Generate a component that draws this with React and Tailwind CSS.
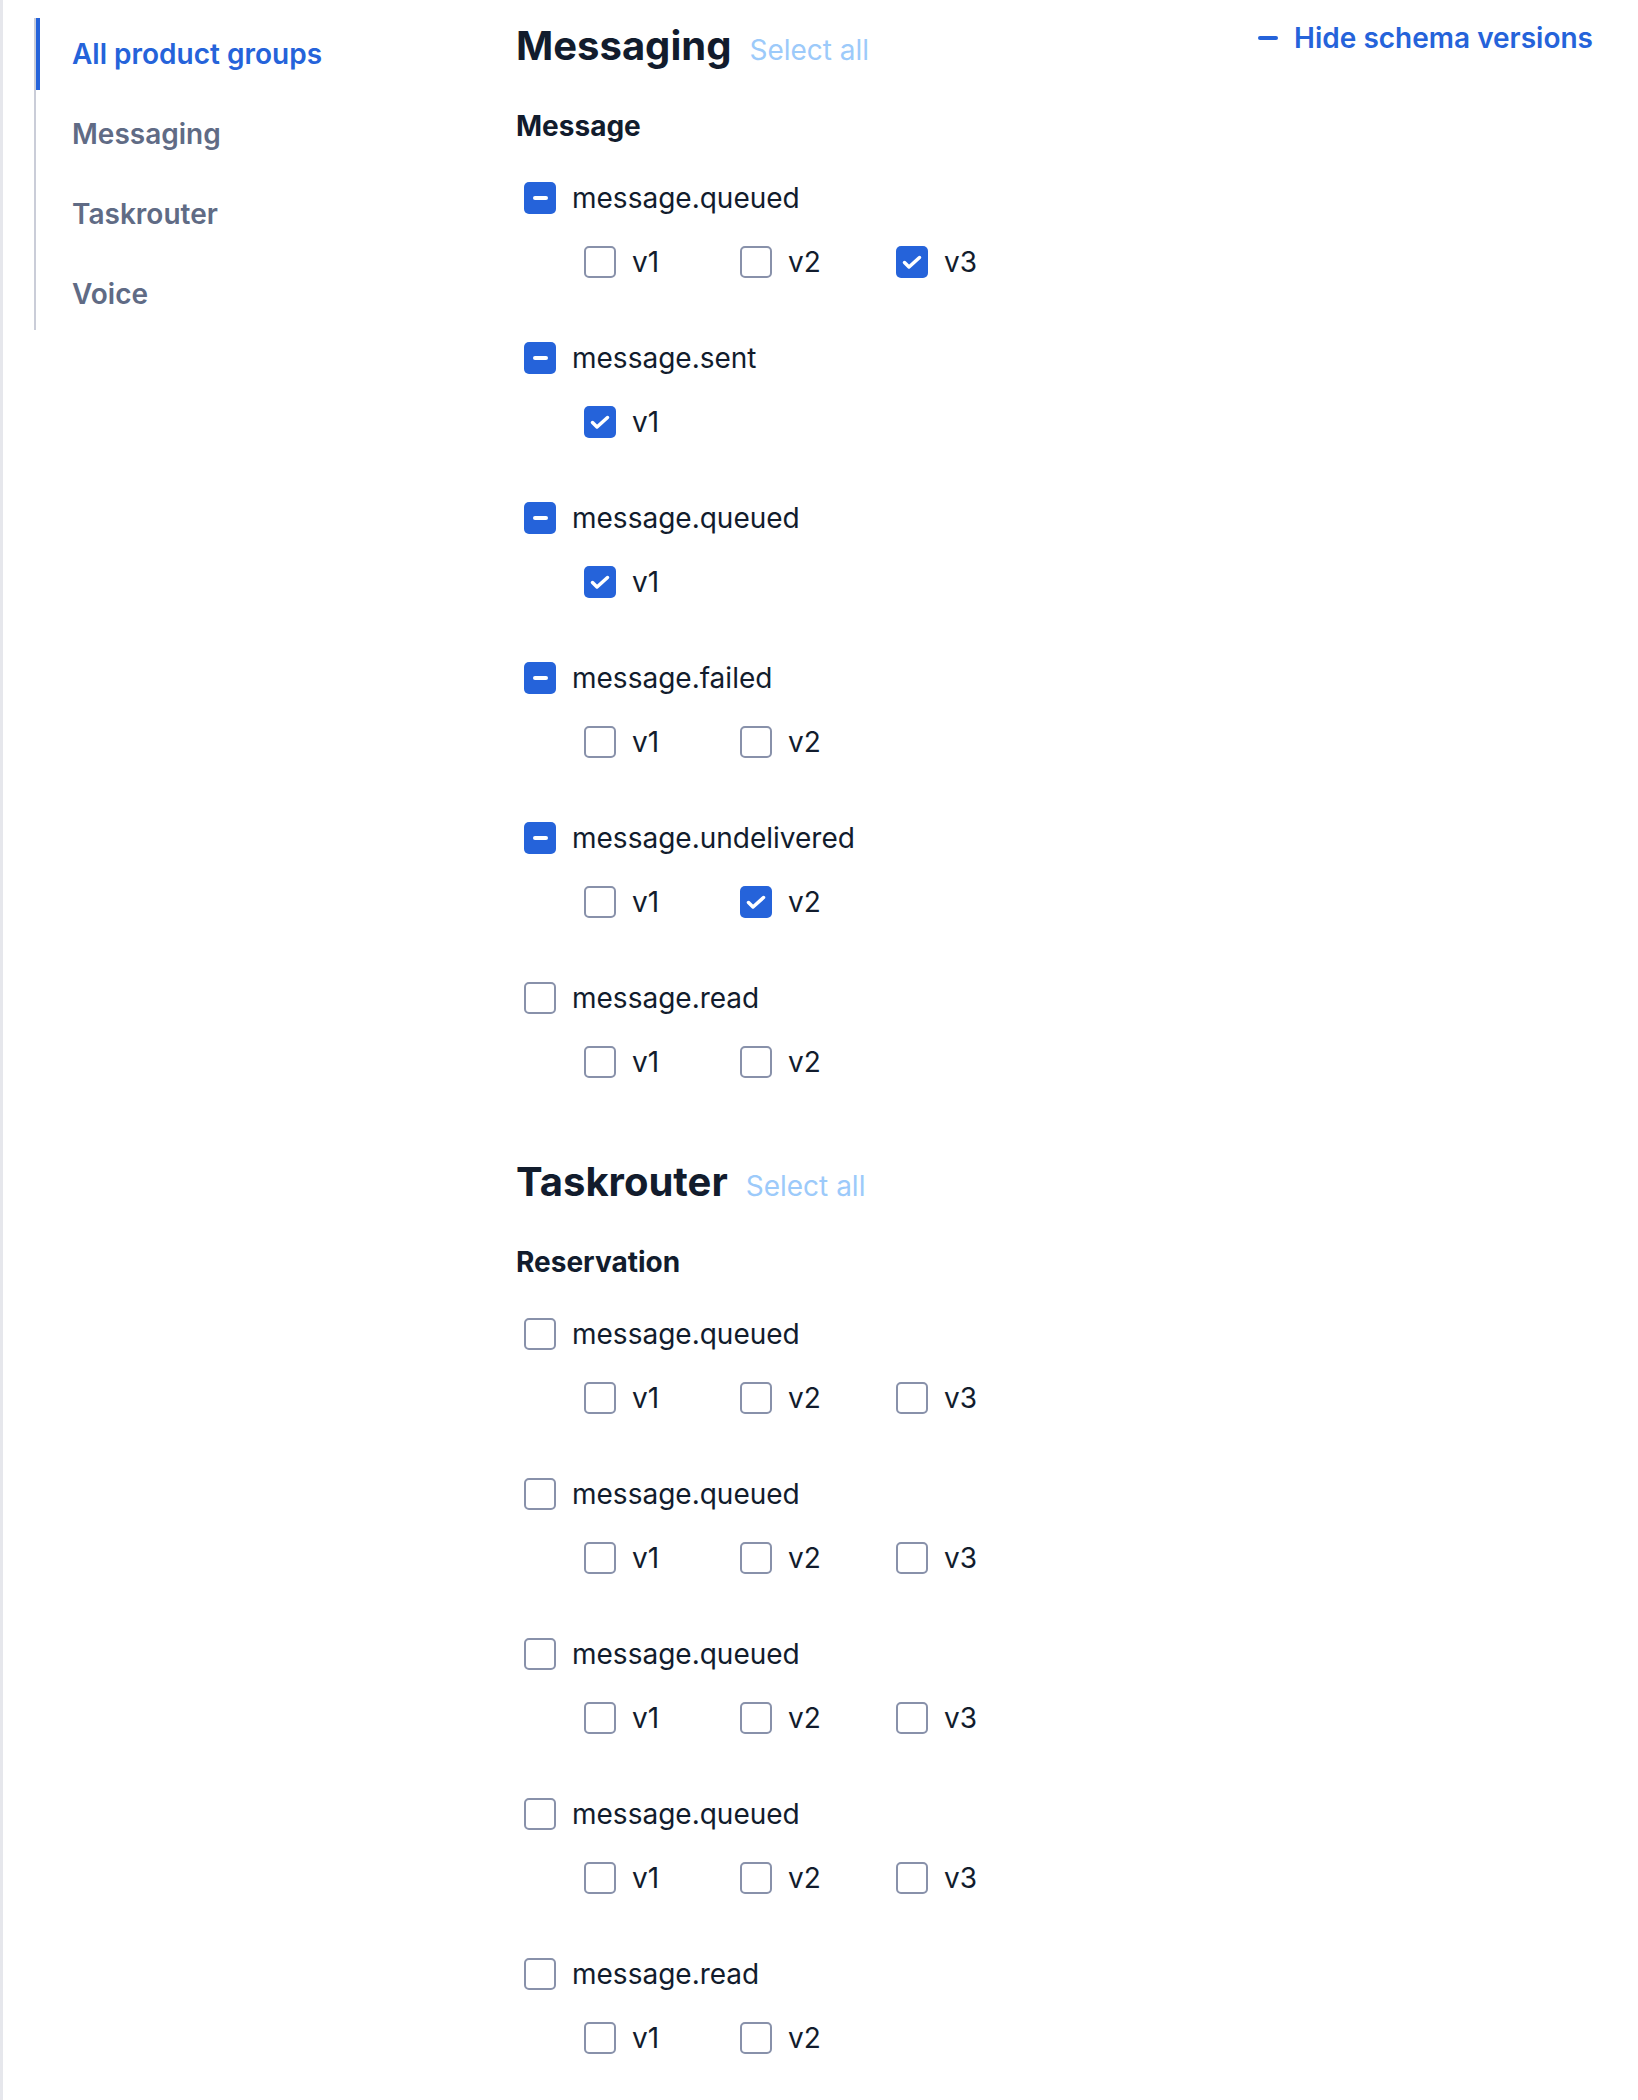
import { useState } from "react";

const grupos = [
  {
    titulo: "Messaging",
    subtitulo: "Message",
    eventos: [
      { nombre: "message.queued", versiones: [false, false, true] },
      { nombre: "message.sent", versiones: [true] },
      { nombre: "message.queued", versiones: [true] },
      { nombre: "message.failed", versiones: [false, false] },
      { nombre: "message.undelivered", versiones: [false, true] },
      { nombre: "message.read", versiones: [false, false], vacio: true },
    ],
  },
  {
    titulo: "Taskrouter",
    subtitulo: "Reservation",
    eventos: [
      { nombre: "message.queued", versiones: [false, false, false], vacio: true },
      { nombre: "message.queued", versiones: [false, false, false], vacio: true },
      { nombre: "message.queued", versiones: [false, false, false], vacio: true },
      { nombre: "message.queued", versiones: [false, false, false], vacio: true },
      { nombre: "message.read", versiones: [false, false], vacio: true },
    ],
  },
];

const navegacion = ["All product groups", "Messaging", "Taskrouter", "Voice"];

function Casilla({ estado }) {
  // estado: "vacio" | "marcado" | "parcial"
  if (estado === "vacio") {
    return (
      <span className="w-8 h-8 shrink-0 rounded-[5px] border-2 border-[#8891aa] bg-white" />
    );
  }
  return (
    <span className="w-8 h-8 shrink-0 rounded-[5px] bg-[#2563da] flex items-center justify-center">
      {estado === "parcial" ? (
        <span className="w-[15px] h-1 rounded-full bg-white" />
      ) : (
        <svg width="32" height="32" viewBox="0 0 32 32" fill="none">
          <path
            d="M8.5 16.5 L13 21 L23.5 11.5"
            stroke="white"
            strokeWidth="3.5"
            strokeLinecap="round"
            strokeLinejoin="round"
          />
        </svg>
      )}
    </span>
  );
}

function Evento({ evento }) {
  return (
    <div className="flex flex-col gap-8">
      <div className="flex items-center gap-4 h-8 ml-2">
        <Casilla estado={evento.vacio ? "vacio" : "parcial"} />
        <span className="text-[28px] leading-8 text-[#121c2d]">{evento.nombre}</span>
      </div>
      <div className="flex h-8 pl-[68px]">
        {evento.versiones.map((marcado, i) => (
          <div key={i} className="w-[156px] flex items-center gap-4">
            <Casilla estado={marcado ? "marcado" : "vacio"} />
            <span className="text-[28px] leading-8 text-[#121c2d]">v{i + 1}</span>
          </div>
        ))}
      </div>
    </div>
  );
}

export default function App() {
  const [activo, setActivo] = useState(0);

  return (
    <div className="min-h-screen flex bg-white border-l-[3px] border-[#e6e7ec] font-['Inter',sans-serif]">
      <nav className="w-[482px] ml-[31px] mt-[18px] shrink-0">
        <ul className="flex flex-col gap-2 border-l-2 border-[#cacdd8]">
          {navegacion.map((item, i) => (
            <li
              key={item}
              onClick={() => setActivo(i)}
              className={
                "h-[72px] flex items-center pl-8 border-l-4 text-[28px] font-semibold cursor-pointer " +
                (activo === i
                  ? "border-[#2563da] text-[#2563da]"
                  : "border-transparent text-[#606b85]")
              }
            >
              {item}
            </li>
          ))}
        </ul>
      </nav>

      <main className="flex-1 pr-[45px] pt-[18px]">
        {grupos.map((grupo, g) => (
          <section key={grupo.titulo} className={g > 0 ? "mt-20" : ""}>
            <div className="flex justify-between items-start">
              <div className={"flex items-baseline gap-[18px] " + (g === 0 ? "mt-[4px]" : "")}>
                <h2 className="text-[40px] leading-[48px] font-bold text-[#121c2d]">
                  {grupo.titulo}
                </h2>
                <button className="text-[28px] leading-10 text-[#9ccafa]">Select all</button>
              </div>
              {g === 0 && (
                <button className="flex items-center gap-4 h-10 text-[28px] font-semibold text-[#2563da]">
                  <span className="w-5 h-1 rounded-full bg-[#2563da]" />
                  Hide schema versions
                </button>
              )}
            </div>

            <h3 className="mt-9 text-[28px] leading-10 font-bold text-[#121c2d]">
              {grupo.subtitulo}
            </h3>

            <div className="mt-9 flex flex-col gap-16">
              {grupo.eventos.map((evento, i) => (
                <Evento key={i} evento={evento} />
              ))}
            </div>
          </section>
        ))}
      </main>
    </div>
  );
}
